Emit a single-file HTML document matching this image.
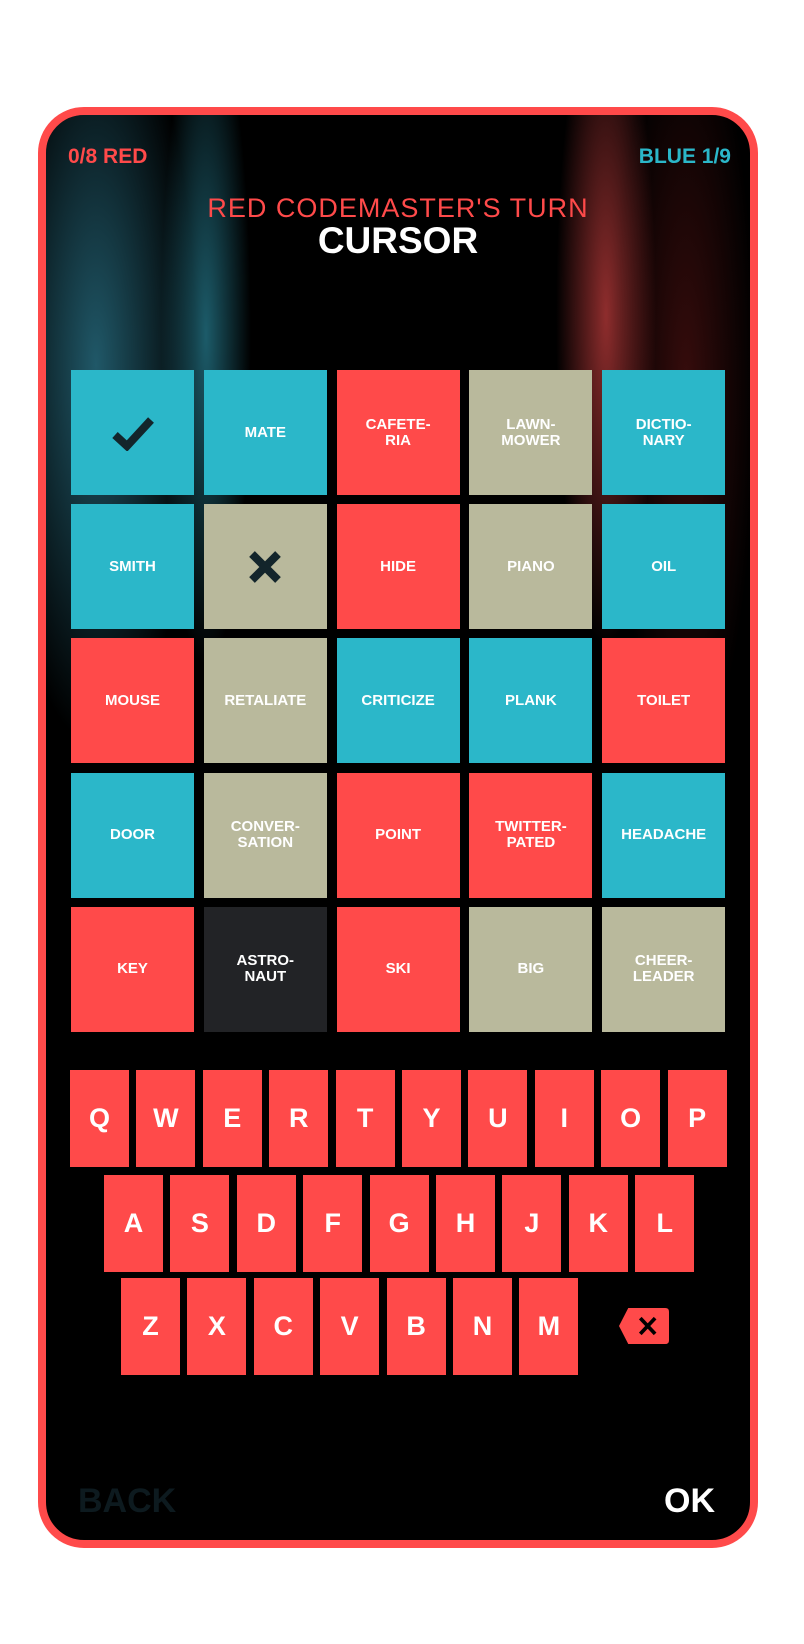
<!DOCTYPE html>
<html><head><meta charset="utf-8"><style>
*{margin:0;padding:0;box-sizing:border-box}
body{width:804px;height:1644px;background:#fff;position:relative;overflow:hidden;font-family:"Liberation Sans",Arial,sans-serif}
.card{position:absolute;left:38px;top:107px;width:720px;height:1441px;border:8px solid #ff4a4a;border-radius:46px;background:#000;overflow:hidden}
.bgl{position:absolute;left:0;top:0;width:330px;height:800px;background:radial-gradient(ellipse 100px 380px at 50px 250px,rgba(40,110,130,.8),rgba(0,0,0,0) 100%),radial-gradient(ellipse 45px 330px at 160px 220px,rgba(40,130,150,.7),rgba(0,0,0,0) 100%)}
.bgr{position:absolute;left:420px;top:0;width:300px;height:800px;background:radial-gradient(ellipse 50px 330px at 140px 200px,rgba(190,60,60,.75),rgba(0,0,0,0) 100%),radial-gradient(ellipse 70px 380px at 220px 270px,rgba(90,20,20,.6),rgba(0,0,0,0) 100%)}
.abs{position:absolute}
.lbl{font-weight:bold;font-size:21px;top:30px}
.cell{position:absolute;width:123px;height:125px;display:flex;align-items:center;justify-content:center;text-align:center;color:#fff;font-weight:bold;font-size:15px;line-height:16px}
.t{background:#2bb7c9}.r{background:#ff4a4a}.b{background:#b9b99c}.d{background:#222326}
.key{position:absolute;width:59px;height:97px;background:#ff4a4a;color:#fff;font-weight:bold;font-size:27px;display:flex;align-items:center;justify-content:center}
</style></head><body>
<div class="card">
<div class="bgl"></div><div class="bgr"></div>
<div class="abs lbl" style="left:22px;color:#ff4a4a">0/8 RED</div>
<div class="abs lbl" style="right:19px;color:#2bb7c9">BLUE 1/9</div>
<div class="abs" style="left:0;width:704px;top:78px;text-align:center;color:#ff4a4a;font-size:27px;letter-spacing:1px">RED CODEMASTER'S TURN</div>
<div class="abs" style="left:0;width:704px;top:105px;text-align:center;color:#fff;font-size:37px;font-weight:bold">CURSOR</div>
</div>
<div id="g"></div>
<script>
var cells=[["t","✓"],["t","MATE"],["r","CAFETE-<br>RIA"],["b","LAWN-<br>MOWER"],["t","DICTIO-<br>NARY"],
["t","SMITH"],["b","✗"],["r","HIDE"],["b","PIANO"],["t","OIL"],
["r","MOUSE"],["b","RETALIATE"],["t","CRITICIZE"],["t","PLANK"],["r","TOILET"],
["t","DOOR"],["b","CONVER-<br>SATION"],["r","POINT"],["r","TWITTER-<br>PATED"],["t","HEADACHE"],
["r","KEY"],["d","ASTRO-<br>NAUT"],["r","SKI"],["b","BIG"],["b","CHEER-<br>LEADER"]];
var h="";
cells.forEach(function(c,i){var x=71+(i%5)*132.8,y=370+Math.floor(i/5)*134.2;
var txt=c[1];
if(txt=="✓")txt='<svg width="44" height="36" viewBox="0 0 44 36"><path d="M4 20 L16 31 L40 5" fill="none" stroke="#13252b" stroke-width="8"/></svg>';
if(txt=="✗")txt='<svg width="36" height="36" viewBox="0 0 36 36"><path d="M5 5 L31 31 M31 5 L5 31" stroke="#13252b" stroke-width="8"/></svg>';
h+='<div class="cell '+c[0]+'" style="left:'+x+'px;top:'+y+'px">'+txt+'</div>';});
var rows=[["QWERTYUIOP",70,1070],["ASDFGHJKL",104,1175],["ZXCVBNM",121,1278]];
rows.forEach(function(r){for(var i=0;i<r[0].length;i++){h+='<div class="key" style="left:'+(r[1]+i*66.4)+'px;top:'+r[2]+'px">'+r[0][i]+'</div>';}});
h+='<svg class="abs" style="left:619px;top:1307px" width="50" height="38" viewBox="0 0 54 39"><path d="M10 0 H50 Q54 0 54 4 V35 Q54 39 50 39 H10 L0 19.5 Z" fill="#ff4a4a"/><path d="M23 11 L39 28 M39 11 L23 28" stroke="#000" stroke-width="4"/></svg>';
h+='<div class="abs" style="left:78px;top:1482px;font-size:34px;font-weight:bold;color:#0d1a1f">BACK</div>';
h+='<div class="abs" style="left:664px;top:1482px;font-size:34px;font-weight:bold;color:#fff">OK</div>';
document.getElementById("g").innerHTML=h;
</script>
</body></html>
